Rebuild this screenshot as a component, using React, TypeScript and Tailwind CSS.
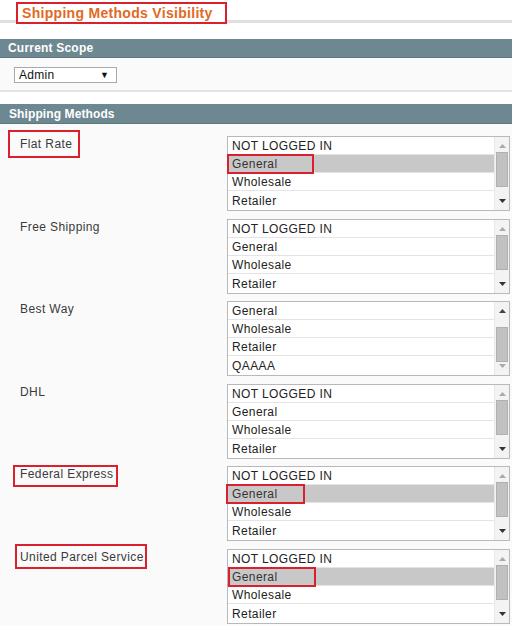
import React from "react";

type Row = {
  label: string;
  items: string[];
  selected?: number;
  labelBox?: { left: number; top: number; w: number; h: number };
  selBox?: { left: number; w: number };
  scrolled?: boolean;
  mb: string;
};

const rows: Row[] = [
  {
    label: "Flat Rate",
    items: ["NOT LOGGED IN", "General", "Wholesale", "Retailer"],
    selected: 1,
    labelBox: { left: 8, top: -6, w: 72, h: 28 },
    selBox: { left: -1, w: 87 },
    mb: "mb-[8px]",
  },
  {
    label: "Free Shipping",
    items: ["NOT LOGGED IN", "General", "Wholesale", "Retailer"],
    mb: "mb-[7px]",
  },
  {
    label: "Best Way",
    items: ["General", "Wholesale", "Retailer", "QAAAA"],
    scrolled: true,
    mb: "mb-[8px]",
  },
  {
    label: "DHL",
    items: ["NOT LOGGED IN", "General", "Wholesale", "Retailer"],
    mb: "mb-[7px]",
  },
  {
    label: "Federal Express",
    items: ["NOT LOGGED IN", "General", "Wholesale", "Retailer"],
    selected: 1,
    labelBox: { left: 13, top: -1, w: 105, h: 22 },
    selBox: { left: -2, w: 79 },
    mb: "mb-[8px]",
  },
  {
    label: "United Parcel Service",
    items: ["NOT LOGGED IN", "General", "Wholesale", "Retailer"],
    selected: 1,
    labelBox: { left: 15, top: -5, w: 132, h: 25 },
    selBox: { left: 0, w: 88 },
    mb: "mb-0",
  },
];

function Scrollbar({ scrolled }: { scrolled?: boolean }) {
  return (
    <div className="relative w-[15px] h-full bg-[#f3f3f3] border-l border-[#e8e8e8]">
      <svg className="absolute left-[4px] top-[7px]" width="7" height="4" viewBox="0 0 7 4">
        <path d="M0 4 L3.5 0 L7 4 Z" fill={scrolled ? "#444" : "#aaa"} />
      </svg>
      <div
        className={
          "absolute left-[1px] w-[12px] h-[35px] bg-[#c1c1c1] border border-[#b0b0b0] " +
          (scrolled ? "top-[25px]" : "top-[15px]")
        }
      />
      <svg className="absolute left-[4px] bottom-[7px]" width="7" height="4" viewBox="0 0 7 4">
        <path d="M0 0 L7 0 L3.5 4 Z" fill={scrolled ? "#aaa" : "#333"} />
      </svg>
    </div>
  );
}

function ListBox({ row }: { row: Row }) {
  return (
    <div className="flex w-[283px] h-[75px] bg-white border border-[#b9b9b9]">
      <div className="flex-1 flex flex-col">
        {row.items.map((it, i) => (
          <div
            key={it}
            className={
              "relative flex items-center h-[18px] pl-[4px] text-[12px] leading-[16px] tracking-[0.4px] text-[#222] " +
              (i < 3 ? "border-b border-[#e4e4e4] " : "flex-1 ") +
              (row.selected === i ? "bg-[#c8c8c8] text-[#333]" : "")
            }
          >
            {it}
            {row.selected === i && row.selBox && (
              <div
                className="absolute top-[-1px] h-[20px] border-2 border-[#d9202e]"
                style={{ left: row.selBox.left, width: row.selBox.w }}
              />
            )}
          </div>
        ))}
      </div>
      <Scrollbar scrolled={row.scrolled} />
    </div>
  );
}

export default function App() {
  return (
    <div
      className="w-[512px] h-[626px] overflow-hidden bg-white"
      style={{ fontFamily: '"Liberation Sans", Arial, sans-serif' }}
    >
      <div className="h-[20px] pl-[16px] pt-[1px]">
        <div className="inline-flex items-center w-[211px] h-[22px] border-2 border-[#dc1f2c] pl-[4px] bg-white relative z-10">
          <span className="text-[14px] leading-[16px] font-bold text-[#e2691f] tracking-[0.3px]">
            Shipping Methods Visibility
          </span>
        </div>
      </div>
      <div className="h-[3px] bg-[#e0e0e0]" />
      <div className="h-[16px]" />
      <div className="h-[19px] bg-[#6e8891] border-b border-[#5d757d] flex items-center pl-[8px]">
        <span className="text-[12px] leading-[14px] font-bold text-white tracking-[0.2px]">Current Scope</span>
      </div>
      <div className="h-[34px] bg-[#fafafa] border-b-2 border-[#e2e2e2] pl-[14px] pt-[9px]">
        <div className="flex items-center justify-between w-[103px] h-[16px] bg-white border border-[#aaa] pl-[4px] pr-[7px]">
          <span className="text-[12px] leading-[14px] text-[#111] tracking-[0.3px]">Admin</span>
          <span className="text-[9px] leading-[10px] text-[#111]">▼</span>
        </div>
      </div>
      <div className="h-[12px]" />
      <div className="h-[20px] bg-[#6e8891] border-b border-[#5d757d] flex items-center pl-[9px]">
        <span className="text-[12px] leading-[14px] font-bold text-white tracking-[0.1px]">Shipping Methods</span>
      </div>
      <div className="bg-[#fafafa] pt-[12px] pb-[20px]">
        {rows.map((r) => (
          <div key={r.label} className={"relative flex " + r.mb}>
            <div className="w-[227px] pl-[20px] pt-[1px] text-[12px] leading-[14px]">
              <span className="text-[#3a3a3a] tracking-[0.4px]">{r.label}</span>
            </div>
            <ListBox row={r} />
            {r.labelBox && (
              <div
                className="absolute border-2 border-[#dc1f2c]"
                style={{
                  left: r.labelBox.left,
                  top: r.labelBox.top,
                  width: r.labelBox.w,
                  height: r.labelBox.h,
                }}
              />
            )}
          </div>
        ))}
      </div>
    </div>
  );
}
